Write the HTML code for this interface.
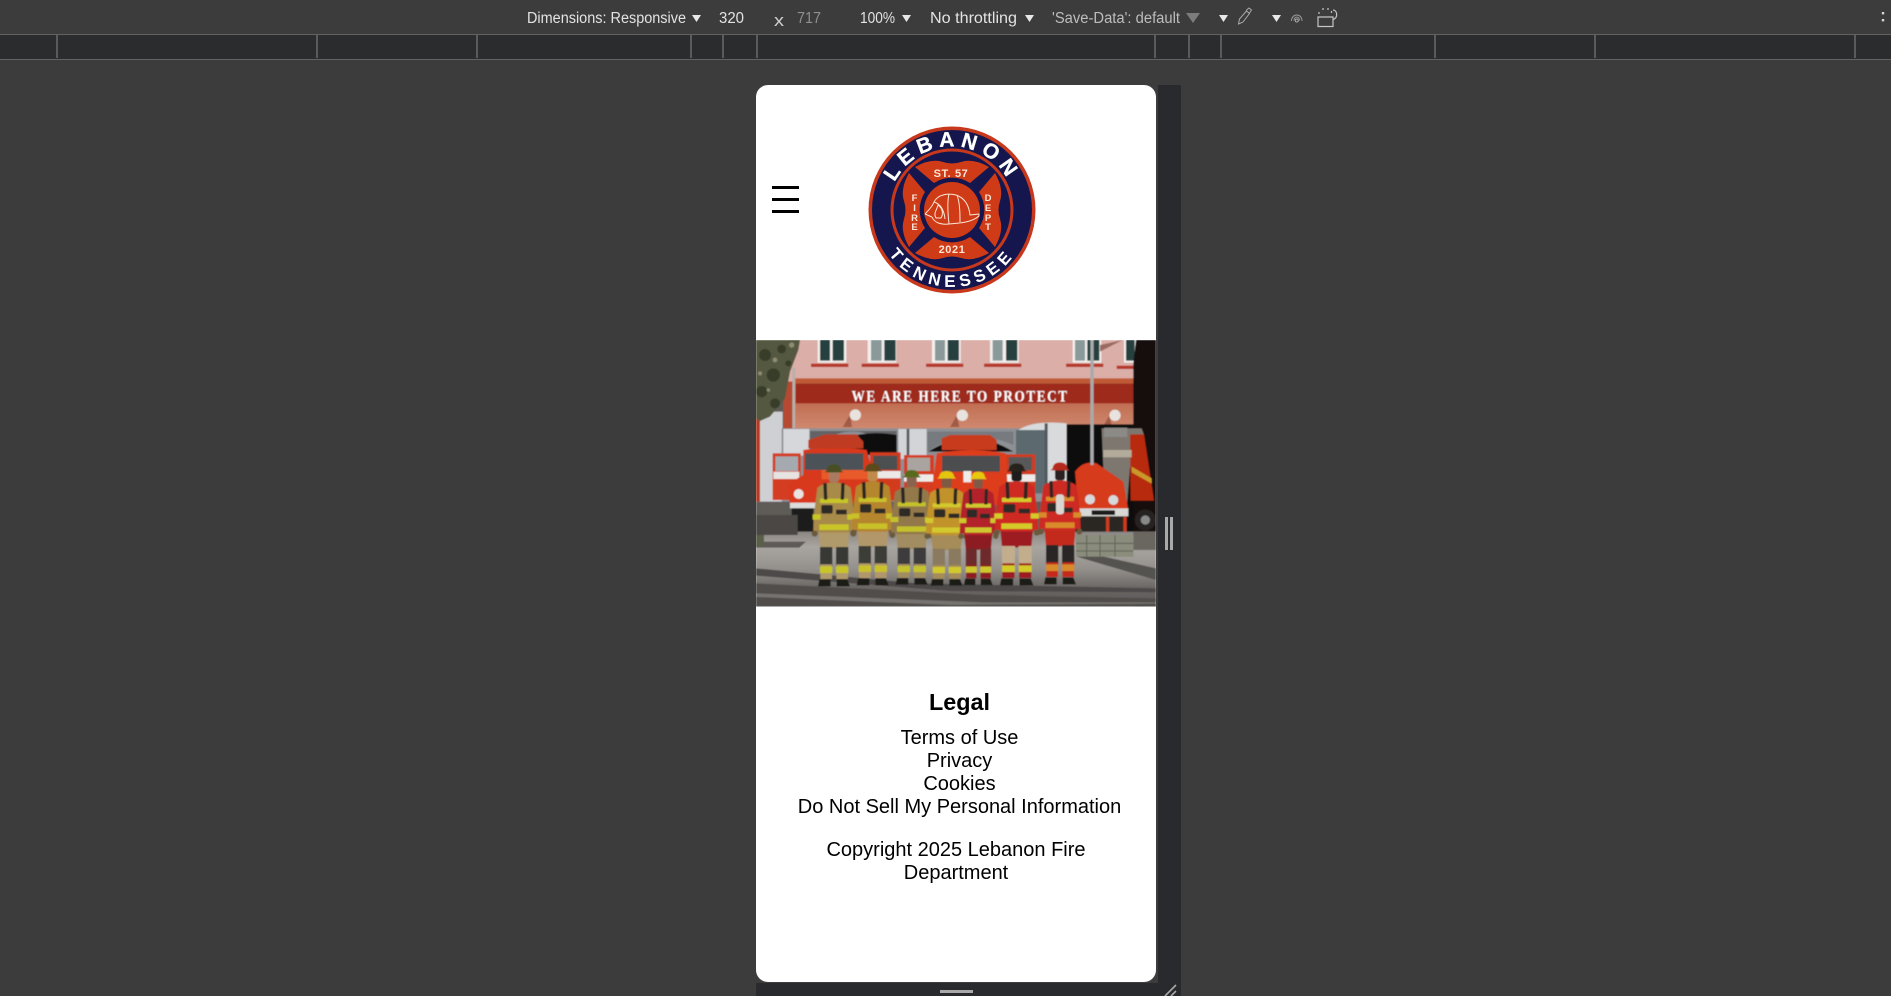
<!DOCTYPE html>
<html lang="en">
<head>
<meta charset="utf-8">
<title>Lebanon Fire Department</title>
<style>
html,body{margin:0;padding:0;width:1891px;height:996px;overflow:hidden;background:#3c3c3c;font-family:"Liberation Sans",Arial,sans-serif}
.a{position:absolute}
#ruler{left:0;top:34px;width:1891px;height:26px;background:#2b2c2e;border-top:1.5px solid #626262;border-bottom:1.5px solid #626262;box-sizing:border-box}
.tk{position:absolute;top:35px;width:1.5px;height:23px;background:#5a5b5d}
#bar-r{left:1158px;top:85px;width:23px;height:911px;background:#292a2d}
#bar-b{left:756px;top:983px;width:425px;height:13px;background:#292a2d}
#vp{left:756px;top:85px;width:400px;height:897px;background:#fff;border-radius:12px;overflow:hidden}
.t{position:absolute;white-space:nowrap;color:#000;line-height:23px;font-size:20px;text-align:center}
.hb{position:absolute;left:772px;width:27px;height:3.4px;background:#000}
</style>
</head>
<body>
<div class="a" id="ruler"></div>
<div class="tk" style="left:56px"></div><div class="tk" style="left:316px"></div><div class="tk" style="left:476px"></div><div class="tk" style="left:690px"></div><div class="tk" style="left:722px"></div><div class="tk" style="left:756px"></div><div class="tk" style="left:1154px"></div><div class="tk" style="left:1188px"></div><div class="tk" style="left:1220px"></div><div class="tk" style="left:1434px"></div><div class="tk" style="left:1594px"></div><div class="tk" style="left:1854px"></div>

<svg class="a" style="left:0;top:0" width="1891" height="34" viewBox="0 0 1891 34" font-family="'Liberation Sans',sans-serif" font-size="15.500">
<g fill="#e3e3e3">
<text x="527" y="23" textLength="159" lengthAdjust="spacingAndGlyphs">Dimensions: Responsive</text>
<text x="719" y="23" textLength="25" lengthAdjust="spacingAndGlyphs">320</text>
<text x="860" y="23" textLength="35" lengthAdjust="spacingAndGlyphs">100%</text>
<text x="930" y="23" textLength="87" lengthAdjust="spacingAndGlyphs">No throttling</text>
</g>
<text x="774" y="26" fill="#d0d0d0" font-size="17" textLength="10" lengthAdjust="spacingAndGlyphs">x</text>
<text x="797" y="23" fill="#8f8f8f" textLength="24" lengthAdjust="spacingAndGlyphs">717</text>
<text x="1052" y="23" fill="#bdbdbd" textLength="128" lengthAdjust="spacingAndGlyphs">'Save-Data': default</text>
<g fill="#e8e8e8">
<path d="M692 15h9l-4.500 7z"/><path d="M902 15h9l-4.500 7z"/><path d="M1025 15h9l-4.500 7z"/><path d="M1219 15h9l-4.500 7z"/><path d="M1272 15h9l-4.500 7z"/>
</g>
<path d="M1186 13h14l-7 10z" fill="#7c7c7c"/>
<g fill="none" stroke="#a9a9a9" stroke-width="1">
<path d="M1238.500 24l1-5 7-8 3 2.500-6.500 8.500zM1246 10.500l3-2.500 2.500 2-2 3"/>
<path d="M1291.500 21c0-8 10.500-8 10.500 0" stroke="#9a9a9a"/><path d="M1294 20.500c0-4.500 5.500-4.500 5.500 0" stroke="#9a9a9a"/><circle cx="1296.800" cy="20.500" r="1.500"/>
<path d="M1318 17h15v9.500h-15z" stroke="#c4c4c4" stroke-width="1.200"/><path d="M1319 14v-3.500m3-1.500h2m3 0h2m2.500 2v3" stroke="#c4c4c4" stroke-dasharray="2 1.500" stroke-width="1.200"/><path d="M1333 10c4 0 5.500 7 .5 9.500" stroke="#c4c4c4" stroke-width="1.200"/>
</g>
<rect x="1881.800" y="12" width="2.400" height="2.400" fill="#d6d6d6"/><rect x="1881.800" y="19" width="2.400" height="2.400" fill="#d6d6d6"/>
</svg>

<div class="a" id="bar-r"></div>
<div class="a" id="bar-b"></div>
<div class="a" style="left:1165px;top:517px;width:2.500px;height:33px;background:#a9a9a9"></div>
<div class="a" style="left:1170px;top:517px;width:2.500px;height:33px;background:#a9a9a9"></div>
<div class="a" style="left:940px;top:990px;width:33px;height:2.500px;background:#a9a9a9"></div>
<svg class="a" style="left:1160px;top:984px" width="20" height="12" viewBox="0 0 20 12"><path d="M5 12L16 1M11 12L16 7" stroke="#a9a9a9" stroke-width="1.600" fill="none"/></svg>

<div class="a" id="vp"></div>

<div class="hb" style="top:186px"></div>
<div class="hb" style="top:198px"></div>
<div class="hb" style="top:210px"></div>

<!-- Logo -->
<svg class="a" style="left:861.700px;top:120px" width="180" height="180" viewBox="-90 -90 180 180" font-family="'Liberation Sans',sans-serif" font-weight="700">
<defs>
<path id="top-arc" d="M-63.500 0A63.500 63.500 0 0 1 63.500 0"/>
<path id="bot-arc" d="M-77 0A77 77 0 0 0 77 0"/>
<path id="arm" d="M-37-43Q-21-52-9-48Q0-45 9-48Q21-52 37-43L18-27A33 33 0 0 0-18-27Z" fill="#cf3a12"/>
<filter id="lb"><feGaussianBlur stdDeviation=".25"/></filter>
</defs>
<g filter="url(#lb)">
<circle r="83.500" fill="#c7391a"/>
<circle r="80" fill="#15194f"/>
<circle r="60" fill="none" stroke="#c7391a" stroke-width="3"/>
<use href="#arm"/><use href="#arm" transform="rotate(90)"/><use href="#arm" transform="rotate(180)"/><use href="#arm" transform="rotate(270)"/>
<circle r="32" fill="#15194f"/>
<circle r="28" fill="#cf3a12"/>
<text fill="#fff" font-size="21" letter-spacing="5.500" text-anchor="middle" stroke="#fff" stroke-width=".3"><textPath href="#top-arc" startOffset="50%">LEBANON</textPath></text>
<text fill="#fff" font-size="17" letter-spacing="5" text-anchor="middle"><textPath href="#bot-arc" startOffset="50%">TENNESSEE</textPath></text>
<text x="-1" y="-33" fill="#fbe6d8" font-size="11" text-anchor="middle" letter-spacing=".6">ST. 57</text>
<text x="0" y="43" fill="#fbe6d8" font-size="11" text-anchor="middle" letter-spacing=".6">2021</text>
<g fill="#fbe6d8" font-size="9.500" text-anchor="middle">
<text x="-37.500" y="-9">F</text><text x="-37.500" y="1">I</text><text x="-37.500" y="11">R</text><text x="-37.500" y="20">E</text>
<text x="36" y="-9">D</text><text x="36" y="1">E</text><text x="36" y="11">P</text><text x="36" y="20">T</text>
</g>
<g fill="none" stroke="#fbe6d8" stroke-width="1" stroke-linejoin="round">
<path d="M-27 4C-22 -1 -19 -5 -18 -8C-14 -16 -3 -17 4 -15C13 -12 17 -4 18 5L27 4L27 6C20 12 10 13 -3 14C-12 15 -18 12 -20 7"/>
<path d="M-27 4L-20 7M-18 -8C-11 -6 -8 0 -7 9M-3 -16C-5 -8 -4 5 -3 14M5 -15C8 -7 8 4 8 12"/>
<path d="M-16 8C-19 3 -15 0 -14 -5C-10 -2 -8 3 -11 8Z"/>
</g>
</g>
</svg>

<!-- Hero -->
<svg class="a" style="left:750px;top:335px" width="440" height="280" viewBox="0 0 1320 840" font-family="'Liberation Serif',serif">
<defs>
<clipPath id="hc"><rect x="18" y="15" width="1200" height="800"/></clipPath>
<filter id="bl" x="-5%" y="-5%" width="110%" height="110%"><feGaussianBlur stdDeviation="1.300"/></filter>
<linearGradient id="gr" x1="0" y1="0" x2="0" y2="1">
<stop offset="0" stop-color="#8b8783"/><stop offset=".2" stop-color="#a9a5a0"/><stop offset=".5" stop-color="#94908c"/><stop offset=".75" stop-color="#6a6765"/><stop offset="1" stop-color="#5a5755"/>
</linearGradient>
<linearGradient id="wl" x1="0" y1="0" x2="0" y2="1"><stop offset="0" stop-color="#c16e52"/><stop offset="1" stop-color="#cf8a70"/></linearGradient>
<g id="ff">
 <path d="M-50 70Q-30 54 0 54Q30 54 50 70L60 150L62 200H48L46 208H-46L-48 200H-62L-60 150Z" fill="var(--c)"/>
 <rect x="-64" y="150" width="24" height="16" fill="var(--s)"/>
 <rect x="40" y="150" width="24" height="16" fill="var(--s)"/>
 <rect x="-42" y="103" width="84" height="13" fill="var(--s)"/>
 <rect x="-44" y="180" width="88" height="17" fill="var(--s)"/>
 <path d="M-32 56h10l2 50h-10z" fill="#2a2522"/>
 <path d="M22 56h10l-2 50h-10z" fill="#2a2522"/>
 <rect x="-38" y="122" width="34" height="26" rx="5" fill="#2f2a26"/>
 <rect x="6" y="136" width="32" height="14" fill="#2f2a26"/>
 <path d="M-46 205H46L42 250H6L0 254L-6 250H-42Z" fill="var(--p)"/>
 <rect x="-42" y="248" width="37" height="62" fill="var(--k)"/>
 <rect x="6" y="248" width="37" height="62" fill="var(--k)"/>
 <rect x="-41" y="300" width="35" height="44" fill="var(--p)"/>
 <rect x="7" y="300" width="35" height="44" fill="var(--p)"/>
 <rect x="-42" y="306" width="37" height="20" fill="var(--s)"/>
 <rect x="6" y="306" width="37" height="20" fill="var(--s)"/>
 <path d="M-44 345H-10V366H-48Z" fill="#1d1a18"/>
 <path d="M8 345H40L48 366H8Z" fill="#1d1a18"/>
 <rect x="-15" y="16" width="30" height="38" rx="8" fill="var(--f)"/>
 <path d="M-22 18Q-20 0 0 0Q20 0 22 18L28 24H-28Z" fill="var(--h)"/>
 <circle cx="-58" cy="208" r="9" fill="#6b5a3c"/><circle cx="58" cy="208" r="9" fill="#6b5a3c"/>
</g>
</defs>
<g clip-path="url(#hc)">
<g filter="url(#bl)">
<rect x="18" y="15" width="1200" height="800" fill="#5f5c59"/>
<!-- wall -->
<rect x="100" y="15" width="1080" height="125" fill="#dcaea8"/>
<g fill="#f2efec">
<rect x="203" y="15" width="86" height="68"/><rect x="353" y="15" width="86" height="68"/><rect x="546" y="15" width="86" height="68"/><rect x="720" y="15" width="86" height="68"/><rect x="968" y="15" width="86" height="68"/><rect x="1122" y="15" width="38" height="68"/>
</g>
<g fill="#25403f">
<rect x="210" y="15" width="30" height="62"/><rect x="248" y="15" width="34" height="62"/><rect x="403" y="15" width="34" height="62"/><rect x="593" y="15" width="34" height="62"/><rect x="768" y="15" width="34" height="62"/><rect x="1012" y="15" width="36" height="62"/><rect x="1128" y="15" width="26" height="62"/>
</g>
<g fill="#8a9a9a">
<rect x="363" y="15" width="32" height="62"/><rect x="555" y="15" width="30" height="62"/><rect x="728" y="15" width="30" height="62"/><rect x="975" y="15" width="30" height="62"/>
</g>
<g fill="#b5392c">
<rect x="183" y="86" width="112" height="10"/><rect x="335" y="86" width="112" height="10"/><rect x="528" y="86" width="112" height="10"/><rect x="702" y="86" width="112" height="10"/><rect x="948" y="86" width="112" height="10"/><rect x="1100" y="92" width="60" height="10"/>
</g>
<rect x="135" y="130" width="1030" height="16" fill="#c05a36"/>
<rect x="135" y="146" width="1035" height="60" fill="#9e2a1a"/>
<rect x="135" y="205" width="1045" height="78" fill="url(#wl)"/>
<path d="M100 140h36v145h-36z" fill="#b54a30"/>
<rect x="18" y="230" width="80" height="270" fill="#cfd0d4"/>
<rect x="18" y="250" width="12" height="250" fill="#b33a22"/>
<!-- lamps -->
<g fill="#8e4a38" opacity=".7"><path d="M300 240l-22 36h28z"/><path d="M620 242l-20 34h28z"/><path d="M1078 242l-20 34h28z"/></g>
<g fill="#e8e3de"><circle cx="316" cy="240" r="17"/><circle cx="637" cy="241" r="17"/><circle cx="1095" cy="241" r="17"/></g>
<!-- door bay -->
<rect x="95" y="280" width="860" height="220" fill="#8d9094"/>
<rect x="100" y="282" width="78" height="80" fill="#d5d7da"/>
<path d="M180 360V288H440V360Q360 285 310 290Q240 285 180 360Z" fill="#646366"/>
<path d="M200 360Q300 275 440 300V360Z" fill="#0e0c0c"/>
<rect x="445" y="282" width="85" height="90" fill="#d2d4d7"/>
<rect x="470" y="282" width="8" height="90" fill="#565a5e"/>
<path d="M532 350Q650 270 790 330V290H532Z" fill="#777a7e"/>
<path d="M535 350Q660 270 790 350Z" fill="#100d0d"/>
<rect x="798" y="285" width="90" height="190" fill="#5b6a70"/>
<path d="M805 285Q850 255 950 265V480H890V285Z" fill="#d9dadc"/>
<rect x="884" y="265" width="9" height="215" fill="#50585e"/>
<rect x="950" y="268" width="215" height="330" fill="#0f0c0c"/>
<!-- right tree -->
<path d="M1150 85L1158 15H1218V815H1150Z" fill="#17110e"/>
<path d="M1050 30L1118 15L1050 50Z" fill="#9a6a60"/>
<!-- back truck right -->
<path d="M1055 280H1175L1182 300L1140 400L1130 520L1060 400Z" fill="#7d7770"/>
<path d="M1140 298H1182L1212 497H1142Z" fill="#b8290f"/>
<path d="M1145 395L1205 430V446L1145 412Z" fill="#c99a2a"/>
<circle cx="1186" cy="555" r="32" fill="#262220"/><circle cx="1186" cy="555" r="14" fill="#888"/>
<rect x="1060" y="345" width="85" height="22" fill="#b4ac9a"/>
<rect x="1062" y="278" width="70" height="28" fill="#8b8a86"/>
<!-- left truck -->
<rect x="68" y="355" width="84" height="140" fill="#d43c20"/>
<rect x="76" y="364" width="68" height="44" fill="#a4aab0"/>
<rect x="70" y="410" width="78" height="22" fill="#e6e3e0"/>
<rect x="360" y="352" width="92" height="145" fill="#d23a1f"/>
<rect x="370" y="362" width="72" height="42" fill="#4c4f50"/>
<rect x="360" y="408" width="92" height="22" fill="#ece9e6"/>
<path d="M160 345Q255 330 350 345L368 412V505H118V445L160 420Z" fill="#d8371a"/>
<rect x="165" y="355" width="175" height="50" fill="#4c5358"/>
<path d="M175 340V315L225 298H320L340 320V340Z" fill="#bf3a22"/>
<rect x="215" y="405" width="150" height="28" fill="#e95a2c"/>
<circle cx="146" cy="477" r="15" fill="#e8e4e0"/>
<rect x="120" y="503" width="180" height="17" fill="#dcdcdc"/>
<rect x="125" y="520" width="65" height="72" fill="#1f1c1b"/>
<!-- center truck -->
<rect x="462" y="360" width="90" height="130" fill="#d43c20"/>
<rect x="472" y="368" width="68" height="40" fill="#a9a4a0"/>
<rect x="462" y="418" width="88" height="22" fill="#eeebe8"/>
<rect x="766" y="358" width="90" height="130" fill="#d23a1f"/>
<rect x="776" y="366" width="70" height="40" fill="#585858"/>
<rect x="770" y="418" width="86" height="22" fill="#eeebe8"/>
<path d="M560 355Q665 335 768 355L775 510H540Z" fill="#de3d1c"/>
<rect x="576" y="362" width="174" height="48" fill="#4c4d4f"/>
<rect x="640" y="408" width="24" height="34" fill="#eeebe8"/>
<path d="M575 345V310L600 300H720L740 315V345Z" fill="#c83a1e"/>
<!-- right truck -->
<path d="M975 410Q1000 375 1040 385L1120 440L1135 525H985Z" fill="#d63b1c"/>
<rect x="985" y="520" width="150" height="24" fill="#d8d8d6"/>
<rect x="1025" y="526" width="70" height="14" fill="#1b1b1b"/>
<circle cx="1020" cy="493" r="15" fill="#d6d8da"/><circle cx="1090" cy="495" r="15" fill="#d6d8da"/>
<rect x="990" y="545" width="140" height="45" fill="#2c2623"/>
<rect x="1068" y="545" width="10" height="45" fill="#cf3a1c"/><rect x="1120" y="545" width="10" height="45" fill="#cf3a1c"/>
<!-- pole -->
<rect x="1021" y="15" width="10" height="375" fill="#a8aaac"/>
<rect x="127" y="100" width="9" height="180" fill="#b8b0aa"/>
<!-- left tree -->
<path d="M18 15H150L145 45L120 110L105 190L60 245L30 258L18 250Z" fill="#55583f"/>
<g fill="#2e3322" opacity=".75">
<circle cx="45" cy="60" r="18"/><circle cx="95" cy="42" r="13"/><circle cx="70" cy="120" r="20"/><circle cx="35" cy="170" r="17"/><circle cx="75" cy="205" r="15"/><circle cx="115" cy="85" r="9"/>
</g>
<g fill="#bdb79e" opacity=".55"><circle cx="75" cy="75" r="7"/><circle cx="30" cy="115" r="6"/><circle cx="55" cy="165" r="5"/><circle cx="125" cy="30" r="8"/></g>
<!-- ground -->
<rect x="18" y="590" width="1200" height="225" fill="url(#gr)"/>
<rect x="18" y="540" width="125" height="60" fill="#4b4744"/>
<path d="M18 700L500 745L1218 760V772L600 768L18 722Z" fill="#4d4a48"/>
<path d="M18 745L700 780L1218 790V815H18Z" fill="#514e4c"/>
<path d="M18 775L700 802L1218 802V806L600 810L18 786Z" fill="#76736f"/>
<path d="M980 665L1218 735V700L1040 660Z" fill="#55524f"/>
<path d="M18 620h150l-20 18H18z" fill="#5d5a58"/>
<path d="M1150 590h68v55h-68z" fill="#6b6661"/>
<rect x="978" y="600" width="172" height="65" fill="#8a8c7c"/>
<g stroke="#5f6055" stroke-width="3"><path d="M978 625H1150M978 648H1150M1010 600V665M1050 600V665M1095 600V665"/></g>
<rect x="18" y="600" width="24" height="35" fill="#5a5f48"/>
<!-- firefighters -->
<use href="#ff" transform="translate(252,388)" style="--c:#a88a48;--s:#c8c626;--p:#b09a6c;--k:#383735;--h:#4a5022;--f:#a87a62"/>
<use href="#ff" transform="translate(368,385)" style="--c:#b5862e;--s:#c9c02a;--p:#b2976a;--k:#3d3c39;--h:#5c4a1e;--f:#c08a4e"/>
<use href="#ff" transform="translate(485,405) scale(1,.94)" style="--c:#93794a;--s:#c4c22c;--p:#a28d62;--k:#3c3a3a;--h:#5a6a1c;--f:#8a6450"/>
<use href="#ff" transform="translate(590,408) scale(1,.94)" style="--c:#c2932c;--s:#d2c92e;--p:#a58c58;--k:#8a7a5e;--h:#e4c60e;--f:#7e5a42"/>
<use href="#ff" transform="translate(685,410) scale(.9,.93)" style="--c:#b3232a;--s:#cfc72e;--p:#8c1b20;--k:#6e2a2a;--h:#e6c80e;--f:#7e5a46"/>
<use href="#ff" transform="translate(800,385) scale(1.05,1)" style="--c:#cf2c24;--s:#d4ca2a;--p:#9c1c20;--k:#c2ae8c;--h:#26231f;--f:#1d1a1c"/>
<use href="#ff" transform="translate(930,382)" style="--c:#cc2a24;--s:#d98a2a;--p:#c42b1c;--k:#2c2828;--h:#b52a1c;--f:#2a2422"/>
<rect x="918" y="478" width="24" height="60" rx="8" fill="#d9d6d2"/>
<text transform="translate(628,199) scale(.82,1)" fill="#fff" font-size="48" font-weight="700" text-anchor="middle" textLength="788" lengthAdjust="spacing">WE ARE HERE TO PROTECT</text>
</g>
</g>
</svg>

<!-- Footer text -->
<div class="t" style="left:756px;width:407px;top:689px;font-size:23.400px;font-weight:700;line-height:27px">Legal</div>
<div class="t" style="left:756px;width:407px;top:727px">Terms of Use</div>
<div class="t" style="left:756px;width:407px;top:750px">Privacy</div>
<div class="t" style="left:756px;width:407px;top:773px">Cookies</div>
<div class="t" style="left:756px;width:407px;top:796px">Do Not Sell My Personal Information</div>
<div class="t" style="left:756px;width:400px;top:839px">Copyright 2025 Lebanon Fire</div>
<div class="t" style="left:756px;width:400px;top:862px">Department</div>
</body>
</html>
